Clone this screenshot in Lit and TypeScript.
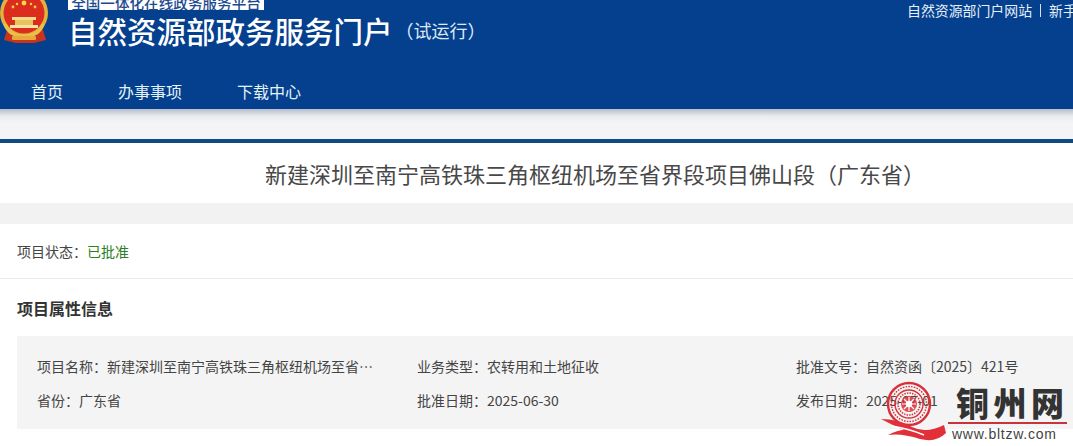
import { LitElement, html, css, svg } from "lit";
import { customElement } from "lit/decorators.js";

const emblem = svg`<svg class="emblem" width="50" height="44" viewBox="0 0 50 44">
  <path d="M7 30 L4 40 L16 43 H34 L46 40 L43 30 Z" fill="#c9341c"/>
  <circle cx="24" cy="13" r="24" fill="#e3b23c"/>
  <circle cx="24" cy="13" r="20.5" fill="#db2c1e"/>
  <g fill="#f6d64a">
    <circle cx="24" cy="3" r="2.4"/><circle cx="13" cy="7" r="1.4"/><circle cx="17" cy="4" r="1.2"/>
    <circle cx="31" cy="4" r="1.2"/><circle cx="35" cy="7" r="1.4"/>
  </g>
  <rect x="12" y="17" width="24" height="3" fill="#f3d98a"/>
  <rect x="15" y="20" width="18" height="5" fill="#e9c35a"/>
  <rect x="10" y="25" width="28" height="3" fill="#f4e3a3"/>
  <path d="M5 24 Q9 36 24 36 Q39 36 43 24" fill="none" stroke="#eac04c" stroke-width="3.5"/>
  <rect x="12" y="36" width="24" height="4" rx="1" fill="#e8a83c"/>
</svg>`;

const seal = svg`<svg class="seal" width="68" height="64" viewBox="0 0 68 64">
  <g fill="none" stroke="#d8303a">
    <circle cx="29" cy="23" r="21" stroke-width="2.4"/>
    <circle cx="29" cy="23" r="17.5" stroke-width="1.4" stroke-dasharray="1.6 1.2"/>
    <circle cx="29" cy="23" r="14" stroke-width="1.4"/>
    <circle cx="29" cy="23" r="11" stroke-width="1.6" stroke-dasharray="1.4 1.2"/>
  </g>
  <circle cx="29" cy="23" r="8" fill="#d8303a" opacity=".85"/>
  <circle cx="29" cy="23" r="3.2" fill="#fff"/>
  <path d="M29 16v14M22 23h14M24 18l10 10M34 18l-10 10" stroke="#fff" stroke-width="1.2"/>
  <path d="M1 38 Q18 38 32 46 Q46 53 64 44 L66 52 Q56 62 40 58 Q22 52 8 54 Q18 49 24 49 Q12 44 1 38 Z" fill="#e2303a"/>
  <path d="M12 45 Q30 48 44 54" fill="none" stroke="#fff" stroke-width="1.4"/>
</svg>`;

@customElement("app-root")
export class AppRoot extends LitElement {
  static styles = css`
    :host {
      display: block;
      position: relative;
      width: 1073px;
      height: 446px;
      overflow: hidden;
      background: #fff;
      color: #444;
      font-family: "Noto Sans CJK SC", "Noto Sans", sans-serif;
      font-size: 14px;
    }
    .header {
      height: 109px;
      background: #05408f;
      color: #fff;
      display: flex;
      flex-direction: column;
      overflow: hidden;
    }
    .top {
      height: 66px;
      display: flex;
      justify-content: space-between;
      flex: none;
    }
    .brand {
      display: flex;
      gap: 18px;
      align-items: flex-start;
    }
    .emblem { flex: none; display: block; }
    .brand-text { display: flex; flex-direction: column; }
    .badge {
      width: 196px;
      height: 10px;
      background: #fff;
      color: #1d4b8f;
      font-size: 14.6px;
      font-weight: 500;
      line-height: 5px;
      text-align: center;
      overflow: hidden;
      white-space: nowrap;
    }
    .name {
      margin-top: 2px;
      display: flex;
      align-items: center;
      white-space: nowrap;
      font-size: 29.5px;
      font-weight: 500;
      line-height: 36px;
    }
    .trial {
      font-size: 18px;
      font-weight: 400;
      margin-left: 3px;
      color: #dfe9f5;
    }
    .links {
      width: 166px;
      flex: none;
      display: flex;
      align-items: center;
      height: 20px;
      gap: 8px;
      white-space: nowrap;
      overflow: hidden;
      font-size: 13.9px;
      color: #e6f0f8;
    }
    .sep { width: 1px; height: 13px; background: #d5e2ef; flex: none; }
    .nav {
      display: flex;
      gap: 55px;
      padding: 14px 0 0 31px;
      font-size: 16px;
      line-height: 22px;
      color: #e4f3f8;
    }
    .band {
      height: 30px;
      background: linear-gradient(#b5bccb 0, #e9ebef 7px, #f4f4f6 14px, #f4f4f6 100%);
      border-bottom: 4px solid #0f4a83;
    }
    .title {
      height: 60px;
      display: flex;
      align-items: center;
      padding-left: 265px;
      font-size: 22px;
      color: #484848;
      white-space: nowrap;
    }
    .gap { height: 21px; background: #f2f2f2; }
    .status {
      height: 55px;
      display: flex;
      align-items: center;
      padding-left: 17px;
      border-bottom: 1px solid #eaeaea;
      box-sizing: border-box;
    }
    .ok { color: #2c7d24; }
    .heading {
      margin: 0;
      padding-left: 17px;
      height: 57px;
      display: flex;
      align-items: center;
      font-size: 16px;
      font-weight: 700;
      color: #333;
      box-sizing: border-box;
    }
    .panel {
      margin-left: 17px;
      height: 93px;
      box-sizing: border-box;
      background: #f4f4f5;
      padding: 13px 0 0 20px;
      display: grid;
      grid-template-columns: 380px 379px 1fr;
      grid-auto-rows: 34px;
    }
    .cell {
      display: flex;
      align-items: center;
      white-space: nowrap;
      min-width: 0;
      color: #444;
    }
    .label { flex: none; }
    .value {
      width: 278px;
      overflow: hidden;
      text-overflow: ellipsis;
    }
    .watermark {
      position: absolute;
      left: 880px;
      top: 381px;
      width: 193px;
      height: 65px;
    }
    .seal { position: absolute; left: 0; top: 0; }
    .wm-name {
      position: absolute;
      left: 76px;
      top: 0;
      width: 108px;
      display: flex;
      justify-content: space-between;
      font-family: "Noto Sans CJK SC", serif;
      font-weight: 900;
      font-size: 33px;
      line-height: 42px;
      color: #333;
    }
    .wm-line {
      position: absolute;
      left: 68px;
      top: 41px;
      width: 119px;
      height: 2px;
      background: #c8343c;
    }
    .wm-url {
      position: absolute;
      left: 72px;
      top: 44px;
      font-family: "Liberation Sans", sans-serif;
      font-size: 14px;
      line-height: 18px;
      letter-spacing: 0.75px;
      color: #444;
      white-space: nowrap;
    }
  `;

  render() {
    return html`
      <div class="header">
        <div class="top">
          <div class="brand">
            ${emblem}
            <div class="brand-text">
              <div class="badge">全国一体化在线政务服务平台</div>
              <div class="name">自然资源部政务服务门户<span class="trial">（试运行）</span></div>
            </div>
          </div>
          <div class="links">
            <span>自然资源部门户网站</span><i class="sep"></i><span>新手指南</span>
          </div>
        </div>
        <div class="nav"><span>首页</span><span>办事事项</span><span>下载中心</span></div>
      </div>
      <div class="band"></div>
      <div class="title">新建深圳至南宁高铁珠三角枢纽机场至省界段项目佛山段（广东省）</div>
      <div class="gap"></div>
      <div class="status"><span>项目状态：</span><span class="ok">已批准</span></div>
      <h2 class="heading">项目属性信息</h2>
      <div class="panel">
        <div class="cell"><span class="label">项目名称：</span><span class="value">新建深圳至南宁高铁珠三角枢纽机场至省界段项目佛山段（广东省）</span></div>
        <div class="cell"><span class="label">业务类型：</span><span>农转用和土地征收</span></div>
        <div class="cell"><span class="label">批准文号：</span><span>自然资函〔2025〕421号</span></div>
        <div class="cell"><span class="label">省份：</span><span>广东省</span></div>
        <div class="cell"><span class="label">批准日期：</span><span>2025-06-30</span></div>
        <div class="cell"><span class="label">发布日期：</span><span>2025-07-01</span></div>
      </div>
      <div class="watermark">
        ${seal}
        <div class="wm-name"><span>铜</span><span>州</span><span>网</span></div>
        <div class="wm-line"></div>
        <div class="wm-url">www.bltzw.com</div>
      </div>
    `;
  }
}
